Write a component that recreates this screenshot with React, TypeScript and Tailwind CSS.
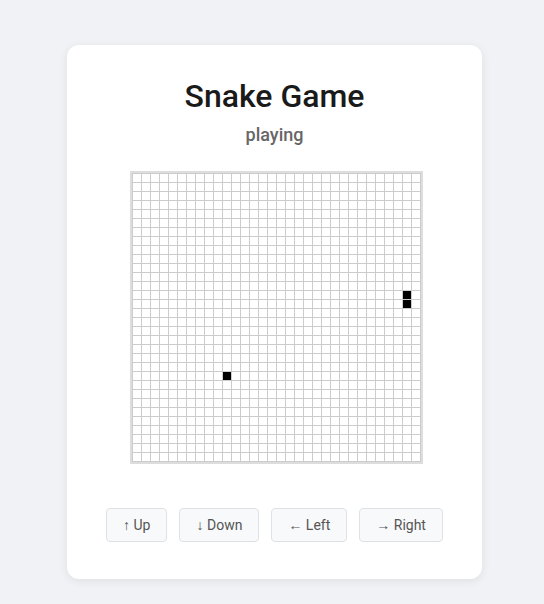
import React, { useState } from 'react';

const SIZE = 32;

type Point = { x: number; y: number };

const App: React.FC = () => {
  const [snake] = useState<Point[]>([
    { x: 30, y: 13 },
    { x: 30, y: 14 },
  ]);
  const [food] = useState<Point>({ x: 10, y: 22 });
  const [status] = useState('playing');

  const isFilled = (x: number, y: number) =>
    snake.some((s) => s.x === x && s.y === y) || (food.x === x && food.y === y);

  const cells = [];
  for (let y = 0; y < SIZE; y++) {
    for (let x = 0; x < SIZE; x++) {
      cells.push(
        <div key={`${x}-${y}`} className={`w-[8px] h-[8px] ${isFilled(x, y) ? 'bg-black' : 'bg-white'}`} />
      );
    }
  }

  const buttons = ['↑ Up', '↓ Down', '← Left', '→ Right'];

  return (
    <div className="min-h-screen bg-[#f0f2f5] pt-[45px] pl-[67px] font-['Roboto',sans-serif]">
      <div className="w-[415px] bg-white rounded-xl shadow-[0_2px_10px_rgba(0,0,0,0.08)] px-8 pt-8 pb-[37px] flex flex-col items-center">
        <h1 className="text-[32px] leading-[38px] font-medium text-[#1a1a1a]">Snake Game</h1>
        <div className="mt-[9px] text-[18px] leading-[22px] font-medium text-[#666]">{status}</div>
        <div className="mt-[25px] ml-[3px] border-2 border-[#ddd] bg-[#ccc] p-px">
          <div className="grid grid-cols-[repeat(32,8px)] gap-px">{cells}</div>
        </div>
        <div className="mt-[44px] flex gap-[12px]">
          {buttons.map((b) => (
            <button
              key={b}
              className="h-[34px] px-4 bg-[#f8f9fa] border border-[#dee2e6] rounded text-[14px] text-[#555]"
            >
              {b}
            </button>
          ))}
        </div>
      </div>
    </div>
  );
};

export default App;
